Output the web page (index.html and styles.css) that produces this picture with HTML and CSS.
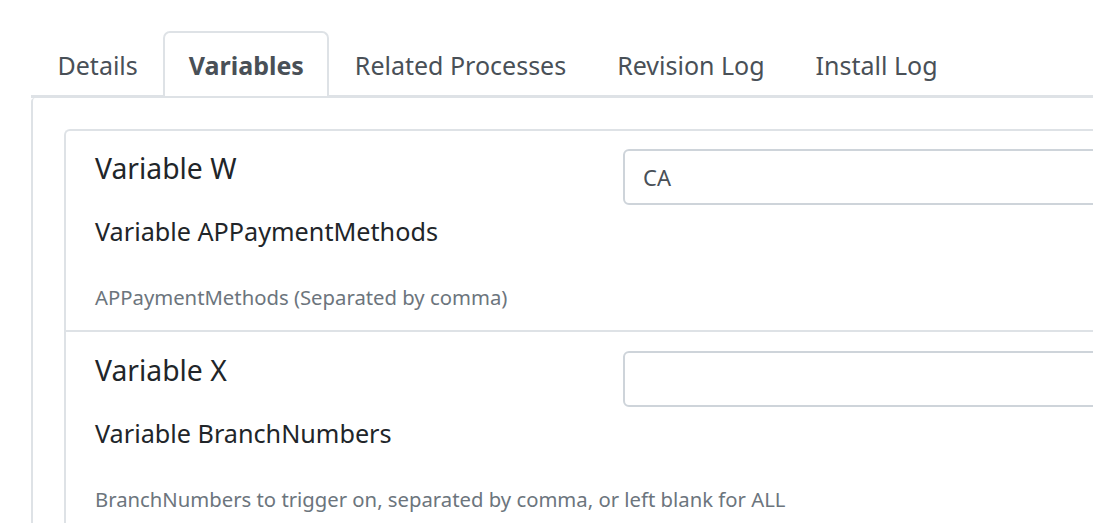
FILE: index.html
```html
<!DOCTYPE html>
<html>
<head>
<meta charset="utf-8">
<link rel="stylesheet" href="styles.css">
</head>
<body>
<div class="page">
  <ul class="tabs">
    <li class="tab">Details</li>
    <li class="tab active">Variables</li>
    <li class="tab">Related Processes</li>
    <li class="tab">Revision Log</li>
    <li class="tab">Install Log</li>
  </ul>
  <div class="panel">
    <div class="card">
      <div class="var-row">
        <div class="var-info">
          <div class="var-title">Variable W</div>
          <div class="var-label">Variable APPaymentMethods</div>
          <div class="var-help">APPaymentMethods (Separated by comma)</div>
        </div>
        <div class="var-input"><input class="input" type="text" value="CA"></div>
      </div>
      <div class="var-row">
        <div class="var-info">
          <div class="var-title">Variable X</div>
          <div class="var-label">Variable BranchNumbers</div>
          <div class="var-help">BranchNumbers to trigger on, separated by comma, or left blank for ALL</div>
        </div>
        <div class="var-input"><input class="input" type="text" value=""></div>
      </div>
    </div>
  </div>
</div>
</body>
</html>
```
FILE: styles.css
```css
html, body {
  margin: 0;
  padding: 0;
  background: #fff;
  overflow: hidden;
}
body {
  font-family: "Noto Sans", "Open Sans", sans-serif;
  color: #212529;
}
.page {
  padding: 31px 0 0 31px;
  width: 1200px;
}
.tabs {
  list-style: none;
  margin: 0;
  padding: 0 0 0 1px;
  display: flex;
  border-bottom: 3px solid #dee2e6;
}
.tab {
  font-size: 25px;
  line-height: 36px;
  padding: 14px 23.5px 13px;
  color: #495057;
  border: 2px solid transparent;
  border-bottom: none;
  border-radius: 7px 7px 0 0;
  margin-bottom: -1px;
  white-space: nowrap;
}
.tab.active {
  font-weight: 700;
  border-color: #dee2e6;
  background: #fff;
}
.panel {
  border-left: 2px solid #dee2e6;
  border-top-left-radius: 4px;
  padding: 31px 0 0 31px;
  height: 600px;
}
.card {
  border: 2px solid #dee2e6;
  border-right: none;
  border-radius: 6px 0 0 0;
}
.var-row {
  display: grid;
  grid-template-columns: 528px 1fr;
  padding: 18px 0 18px 29px;
}
.var-row + .var-row {
  border-top: 2px solid #dee2e6;
  padding-top: 19px;
}
.var-info {
  min-width: 0;
}
.var-title {
  font-size: 28.3px;
  line-height: 38px;
}
.var-label {
  font-size: 25.2px;
  line-height: 36px;
  margin-top: 26px;
  white-space: nowrap;
}
.var-help {
  font-size: 20.3px;
  line-height: 30px;
  margin-top: 33px;
  color: #6c757d;
  white-space: nowrap;
}
.input {
  display: block;
  box-sizing: border-box;
  width: 100%;
  height: 56px;
  border: 2px solid #ced4da;
  border-radius: 6px;
  padding: 0 18px;
  font-family: inherit;
  font-size: 22px;
  color: #495057;
  background: #fff;
  outline: none;
}
```
